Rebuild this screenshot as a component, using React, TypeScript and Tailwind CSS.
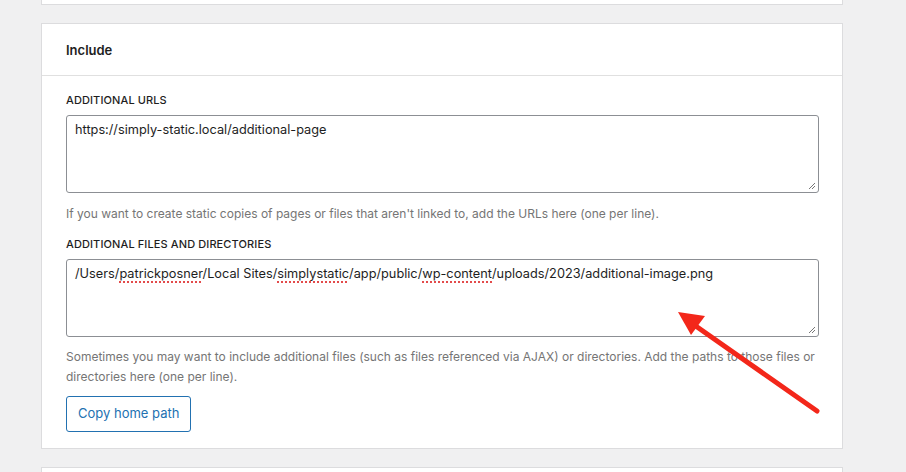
import React from 'react';

const ResizeGrip = () => (
  <svg className="absolute bottom-[2px] right-[2px]" width="8" height="8" viewBox="0 0 8 8">
    <path d="M1 7L7 1M4 7L7 4" stroke="#777" strokeWidth="1" />
  </svg>
);

const Spell: React.FC<{ children: React.ReactNode }> = ({ children }) => (
  <span className="underline decoration-dotted decoration-[#e34b4b] decoration-2 underline-offset-[3px]">{children}</span>
);

const App: React.FC = () => {
  return (
    <div className="relative w-[906px] h-[472px] overflow-hidden bg-[#f0f0f1] font-['Inter',sans-serif] text-[#1e1e1e]">
      {/* previous card bottom */}
      <div className="ml-[41px] w-[802px] h-[5px] bg-white border border-t-0 border-[#dcdcde]" />

      {/* Include card */}
      <div className="ml-[41px] mt-[18px] w-[802px] bg-white border border-[#dcdcde]">
        <div className="h-[52px] px-[24px] pt-[2px] flex items-center border-b border-[#e0e0e0]">
          <h2 className="text-[13px] font-semibold">Include</h2>
        </div>

        <div className="px-[24px] pt-[17px] pb-[16px]">
          <label className="block text-[11px] font-medium uppercase tracking-[0.01em] leading-[14px]">Additional URLs</label>
          <div className="relative mt-[8px] w-[753px] h-[78px] border border-[#8c8f94] rounded-[3px] px-[8px] py-[5px] text-[12.75px] leading-[18px]">
            https://simply-static.local/additional-page
            <ResizeGrip />
          </div>
          <p className="mt-[12px] text-[12px] leading-[18px] text-[#757575]">
            If you want to create static copies of pages or files that aren't linked to, add the URLs here (one per line).
          </p>

          <label className="block mt-[14px] text-[11px] font-medium uppercase tracking-[0.01em] leading-[14px]">Additional Files and Directories</label>
          <div className="relative mt-[8px] w-[753px] h-[78px] border border-[#8c8f94] rounded-[3px] px-[8px] py-[5px] text-[12.75px] leading-[18px]">
            /Users/<Spell>patrickposner</Spell>/Local Sites/<Spell>simplystatic</Spell>/app/public/<Spell>wp-content</Spell>/uploads/2023/additional-image.png
            <ResizeGrip />
          </div>
          <p className="mt-[10px] text-[12px] leading-[20px] text-[#757575]">
            Sometimes you may want to include additional files (such as files referenced via AJAX) or directories. Add the paths to those files or
            <br />
            directories here (one per line).
          </p>

          <button className="mt-[9px] h-[36px] px-[11px] border border-[#2271b1] rounded-[3px] text-[13px] text-[#2271b1] bg-white">
            Copy home path
          </button>
        </div>
      </div>

      {/* next card top */}
      <div className="ml-[41px] mt-[18px] w-[802px] h-[20px] bg-white border border-[#dcdcde]" />

      {/* annotation arrow */}
      <svg className="absolute left-0 top-0 pointer-events-none" width="906" height="472">
        <line x1="817" y1="411" x2="690" y2="322" stroke="#f3271a" strokeWidth="5" strokeLinecap="round" />
        <polygon points="678,312 691,335 705,316" fill="#f3271a" />
      </svg>
    </div>
  );
};

export default App;
